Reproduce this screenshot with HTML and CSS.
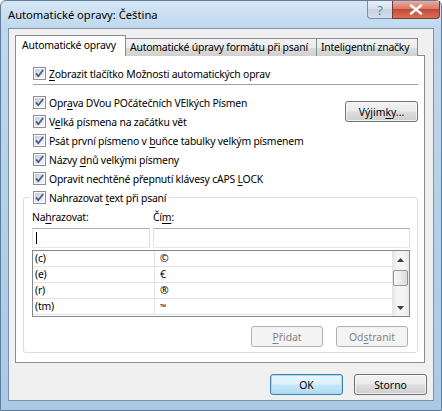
FILE: index.html
```html
<!DOCTYPE html>
<html lang="cs">
<head>
    <meta charset="UTF-8">
    <meta name="viewport" content="width=device-width, initial-scale=1.0">
    <title>Automatické opravy: Čeština</title>
    <link rel="stylesheet" href="styles.css">
</head>
<body>
    <div class="window">
        <div class="titlebar">
            <span class="caption">Automatické opravy: Čeština</span>
            <div class="caption-buttons">
                <span class="help-btn">?</span>
                <span class="close-btn">
                    <svg width="14" height="11" viewBox="0 0 14 11"><path d="M2 1.5l10 8M12 1.5l-10 8" stroke="#fff" stroke-width="2.4" stroke-linecap="round"/></svg>
                </span>
            </div>
        </div>

        <div class="client">
            <div class="tabs">
                <div class="tab active">Automatické opravy</div>
                <div class="tab tab-format">Automatické úpravy formátu při psaní</div>
                <div class="tab tab-smart">Inteligentní značky</div>
            </div>

            <div class="page">
                <label class="check top-check">
                    <span class="cb"><svg viewBox="0 0 9 9"><path d="M1 4.4l2.3 2.8L8.2 1"/></svg></span>
                    <span><u>Z</u>obrazit tlačítko Možnosti automatických oprav</span>
                </label>
                <div class="sep"></div>

                <div class="options">
                    <div class="option-list">
                        <label class="check">
                            <span class="cb"><svg viewBox="0 0 9 9"><path d="M1 4.4l2.3 2.8L8.2 1"/></svg></span>
                            <span>Opr<u>a</u>va DVou POčátečních VElkých Písmen</span>
                        </label>
                        <label class="check">
                            <span class="cb"><svg viewBox="0 0 9 9"><path d="M1 4.4l2.3 2.8L8.2 1"/></svg></span>
                            <span>V<u>e</u>lká písmena na začátku vět</span>
                        </label>
                        <label class="check">
                            <span class="cb"><svg viewBox="0 0 9 9"><path d="M1 4.4l2.3 2.8L8.2 1"/></svg></span>
                            <span>Psát první písmeno v <u>b</u>uňce tabulky velkým písmenem</span>
                        </label>
                        <label class="check">
                            <span class="cb"><svg viewBox="0 0 9 9"><path d="M1 4.4l2.3 2.8L8.2 1"/></svg></span>
                            <span>Názvy <u>d</u>nů velkými písmeny</span>
                        </label>
                        <label class="check">
                            <span class="cb"><svg viewBox="0 0 9 9"><path d="M1 4.4l2.3 2.8L8.2 1"/></svg></span>
                            <span>Opravit nechtěné přepnutí klávesy cAPS <u>L</u>OCK</span>
                        </label>
                    </div>
                    <button class="btn exceptions">Výjim<u>k</u>y...</button>
                </div>

                <fieldset class="replace">
                    <legend>
                        <label class="check">
                            <span class="cb"><svg viewBox="0 0 9 9"><path d="M1 4.4l2.3 2.8L8.2 1"/></svg></span>
                            <span>Nahrazovat <u>t</u>ext při psaní</span>
                        </label>
                    </legend>

                    <div class="replace-grid">
                        <span class="field-label">Na<u>h</u>razovat:</span>
                        <span class="field-label">Čí<u>m</u>:</span>
                        <div class="field"><span class="caret"></span></div>
                        <div class="field"></div>
                    </div>

                    <div class="listbox">
                        <div class="rows">
                            <div class="row"><span>(c)</span><span>©</span></div>
                            <div class="row"><span>(e)</span><span>€</span></div>
                            <div class="row"><span>(r)</span><span>®</span></div>
                            <div class="row"><span>(tm)</span><span class="tm">™</span></div>
                        </div>
                        <div class="scrollbar">
                            <span class="arrow"><svg width="7" height="4" viewBox="0 0 7 4"><path d="M0 4L3.5 0L7 4z"/></svg></span>
                            <span class="thumb"></span>
                            <span class="track"></span>
                            <span class="arrow"><svg width="7" height="4" viewBox="0 0 7 4"><path d="M0 0L3.5 4L7 0z"/></svg></span>
                        </div>
                    </div>

                    <div class="group-buttons">
                        <button class="btn" disabled><u>P</u>řidat</button>
                        <button class="btn" disabled>Od<u>s</u>tranit</button>
                    </div>
                </fieldset>
            </div>

            <div class="dialog-buttons">
                <button class="btn default">OK</button>
                <button class="btn">Storno</button>
            </div>
        </div>
    </div>
</body>
</html>
```

FILE: styles.css
```css
body {
    margin: 0;
    background: #fff;
    font-family: "Noto Sans", "Liberation Sans", sans-serif;
    font-size: 10.4px;
    letter-spacing: -0.2px;
    color: #000;
}
u {
    text-decoration-thickness: 1px;
    text-underline-offset: 2px;
}

/* window frame */
.window {
    width: 442px;
    height: 411px;
    box-sizing: border-box;
    border: 1px solid #5e7d9c;
    border-radius: 6px 6px 0 0;
    background: linear-gradient(180deg, #d6e6f5 0, #c0d8ee 26px, #b1cfe9 60%, #a9cae6 100%);
    display: flex;
    flex-direction: column;
}
.titlebar {
    height: 27px;
    display: flex;
    align-items: flex-start;
}
.caption {
    padding: 6px 0 0 7px;
    font-size: 11.2px;
    letter-spacing: 0;
    line-height: 15px;
}
.caption-buttons {
    margin-left: auto;
    margin-right: 1px;
    display: flex;
}
.help-btn,
.close-btn {
    height: 18px;
    box-sizing: border-box;
    display: flex;
    align-items: center;
    justify-content: center;
}
.help-btn {
    width: 25px;
    border: 1px solid #7b8ea4;
    border-top: none;
    border-right: none;
    border-radius: 0 0 0 4px;
    background: linear-gradient(180deg, #e8eff6 0, #d8e3ee 45%, #c3d3e3 50%, #d2e0ed 100%);
    color: #6b7f95;
    font-size: 13px;
    letter-spacing: 0;
}
.close-btn {
    width: 48px;
    border: 1px solid #7a3a32;
    border-top: none;
    border-radius: 0 0 4px 0;
    background: linear-gradient(180deg, #e9ad9e 0, #d9796a 45%, #c44a36 50%, #d67258 100%);
}

/* client area */
.client {
    height: 373px;
    box-sizing: border-box;
    margin: 0 7px;
    border: 1px solid #7e91a8;
    background: #f0f0f0;
    padding: 6px 8px 0 6px;
}

/* tabs */
.tabs {
    display: flex;
    align-items: flex-end;
    height: 21px;
    margin-bottom: -1px;
}
.tab {
    height: 18px;
    box-sizing: border-box;
    border: 1px solid #898c95;
    border-bottom: none;
    padding: 1px 0 0 4px;
    line-height: 15px;
    white-space: nowrap;
    background: linear-gradient(180deg, #f3f3f3 0, #ebebeb 50%, #dddddd 51%, #d0d0d0 100%);
    margin-left: -1px;
}
.tab.active {
    position: relative;
    height: 21px;
    width: 111px;
    padding: 2px 0 0 6px;
    margin-left: 0;
    background: #fff;
}
.tab-format {
    width: 192px;
}
.tab-smart {
    width: 102px;
}

.page {
    height: 308px;
    box-sizing: border-box;
    border: 1px solid #898c95;
    background: #fff;
    padding: 8px 6px 0 0;
}

/* checkboxes */
.check {
    display: flex;
    align-items: center;
    height: 19px;
    gap: 3px;
    white-space: nowrap;
}
.cb {
    width: 13px;
    height: 13px;
    box-sizing: border-box;
    flex: none;
    border: 1px solid #8e8f8f;
    padding: 1px;
    background: linear-gradient(135deg, #c6cbd2, #f6f7f8) content-box, #f4f4f4;
    box-shadow: inset 0 0 0 1px #fbfbfb;
}
.cb svg {
    display: block;
    width: 9px;
    height: 9px;
    overflow: visible;
}
.cb path {
    fill: none;
    stroke: #3d5a8c;
    stroke-width: 1.7;
}
.top-check {
    margin-left: 17px;
}
.sep {
    margin: 1px 0 0 17px;
    height: 1px;
    background: #a0a0a0;
    border-bottom: 1px solid #fff;
}

.options {
    display: flex;
    justify-content: space-between;
    margin: 7px 0 0 17px;
}
.exceptions {
    margin-top: 8px;
}

/* buttons */
.btn {
    width: 73px;
    height: 21px;
    box-sizing: border-box;
    padding: 0;
    border: 1px solid #707070;
    border-radius: 3px;
    background: linear-gradient(180deg, #f2f2f2 0, #ebebeb 48%, #dddddd 52%, #cfcfcf 100%);
    box-shadow: inset 0 0 0 1px rgba(255, 255, 255, 0.7);
    font: inherit;
    color: #000;
}
.btn:disabled {
    border-color: #adb2b5;
    background: #f4f4f4;
    box-shadow: none;
    color: #838383;
}
.btn.default {
    border-color: #3c7fb1;
    background: linear-gradient(180deg, #eaf6fd 0, #dcf1fc 48%, #c5e7f9 52%, #b4dbf2 100%);
    box-shadow: inset 0 0 0 1px #a6dcf5;
}

/* replace group */
.replace {
    margin: 0 0 0 7px;
    padding: 0 7px 5px 8px;
    border: 1px solid #d5dfe5;
    border-radius: 3px;
    min-width: 0;
}
.replace legend {
    padding: 0 3px;
    margin-left: -2px;
}
.replace-grid {
    display: grid;
    grid-template-columns: 118px 1fr;
    grid-template-rows: 21px 20px;
    column-gap: 3px;
}
.field-label {
    line-height: 21px;
}
.field {
    box-sizing: border-box;
    border: 1px solid #abadb3;
    border-color: #abadb3 #dbdfe6 #e3e9ef #e2e3ea;
    background: #fff;
    padding: 3px 0 0 3px;
}
.caret {
    display: block;
    width: 1px;
    height: 12px;
    background: #000;
}

.listbox {
    margin-top: 2px;
    height: 67px;
    box-sizing: border-box;
    border: 1px solid #828790;
    display: flex;
    background: #fff;
}
.rows {
    flex: 1;
}
.row {
    display: grid;
    grid-template-columns: 121px 1fr;
    height: 16px;
    box-sizing: border-box;
    border-bottom: 1px solid #e3e3e3;
    line-height: 15px;
}
.row span {
    padding-left: 2px;
}
.row span + span {
    border-left: 1px solid #e3e3e3;
    padding-left: 5px;
}
.tm {
    font-size: 8px;
}

.scrollbar {
    width: 17px;
    display: flex;
    flex-direction: column;
    background: linear-gradient(90deg, #e3e3e3 0, #f4f4f4 30%, #f4f4f4 70%, #e8e8e8 100%);
}
.arrow {
    height: 17px;
    display: flex;
    align-items: center;
    justify-content: center;
}
.arrow svg {
    fill: #3b3b3b;
}
.thumb {
    height: 16px;
    margin: 2px 1px 0;
    box-sizing: border-box;
    border: 1px solid #959595;
    border-radius: 2px;
    background: linear-gradient(90deg, #f6f6f6 0, #ececec 50%, #d9d9d9 100%);
}
.track {
    flex: 1;
}

.group-buttons {
    display: flex;
    justify-content: flex-end;
    gap: 13px;
    margin-top: 9px;
    padding-right: 2px;
}
.group-buttons .btn {
    width: 72px;
}

.dialog-buttons {
    display: flex;
    justify-content: flex-end;
    gap: 11px;
    margin: 11px -2px 0 0;
}
```
